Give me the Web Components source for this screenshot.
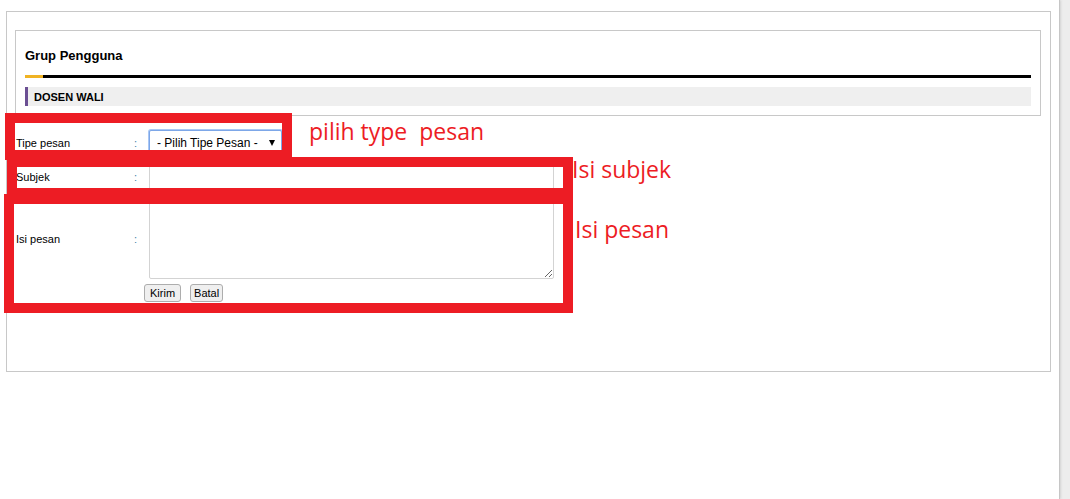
<!DOCTYPE html>
<html lang="id">
<head>
<meta charset="utf-8">
<title>Grup Pengguna</title>
<style>
  html { background: #ededed; }
  body { margin: 0; font: 11px/16px "Liberation Sans", Arial, sans-serif; color: #000; }
</style>
</head>
<body>
<app-page>
  <message-panel>
    <group-card heading="Grup Pengguna">DOSEN WALI</group-card>
    <message-form></message-form>
    <mark-box style="--x:-2px; --y:101px; --w:287px; --h:47px"></mark-box>
    <mark-box style="--x:0px; --y:145px; --w:566px; --h:41px"></mark-box>
    <mark-box style="--x:-3px; --y:182px; --w:569px; --h:119px"></mark-box>
    <mark-note style="--x:302px; --y:103px">pilih type  pesan</mark-note>
    <mark-note style="--x:565px; --y:141px">Isi subjek</mark-note>
    <mark-note style="--x:568px; --y:201px">Isi pesan</mark-note>
  </message-panel>
</app-page>
<script>
function define(name, html, setup) {
  const template = document.createElement('template');
  template.innerHTML = html.trim();
  customElements.define(name, class extends HTMLElement {
    connectedCallback() {
      if (this.shadowRoot) return;
      const root = this.attachShadow({ mode: 'open' });
      root.append(template.content.cloneNode(true));
      if (setup) setup(this, root);
    }
  });
}

define('app-page', `
  <style>
    :host { display: block; box-sizing: border-box; min-height: 100vh; margin-right: 10px;
      padding: 11px 8px 24px 6px; background: #fff; border-right: 1px solid #c6c6c6;
      box-shadow: 1px 0 2px #d4d4d4; }
  </style><slot></slot>`);

define('message-panel', `
  <style>
    :host { display: block; position: relative; box-sizing: border-box; min-height: 361px;
      padding: 18px 9px 68px 8px; border: 1px solid #c8c8c8; }
  </style><slot></slot>`);

define('group-card', `
  <style>
    :host { display: block; padding: 16px 9px 9px; border: 1px solid #c8c8c8; }
    h2 { margin: 0 0 10px; font-size: 13px; line-height: 18px; }
    .rule { height: 3px; margin-bottom: 9px; background: #000; }
    .rule::before { content: ""; display: block; width: 18px; height: 3px; background: #f0b323; }
    h3 { margin: 0; padding: 1px 0 0 6px; border-left: 3px solid #6b4f93; background: #efefef;
      font-size: 11px; line-height: 18px; }
  </style>
  <h2></h2><div class="rule"></div><h3><slot></slot></h3>`,
  (host, root) => { root.querySelector('h2').textContent = host.getAttribute('heading'); });

define('form-row', `
  <style>
    :host { display: grid; grid-template-columns: 118px 15px minmax(0, 405px); align-items: center; }
    i { font-style: normal; color: #4583a8; }
    select, input, textarea { box-sizing: border-box; margin: 0; background: #fff; color: #000;
      border: 1px solid #d3d3d3; border-radius: 2px; outline: none; }
    select { width: 133px; height: 26px; padding: 0 7px; appearance: none;
      border-color: #7da7e8; box-shadow: 0 0 0 1px #a9c7f5; font: 12px/16px "Liberation Sans", Arial, sans-serif; }
    .pick { position: relative; width: 133px; height: 26px; }
    .pick svg { position: absolute; right: 6px; top: 9px; pointer-events: none; }
    input { width: 100%; height: 26px; }
    textarea { display: block; width: 100%; height: 81px; resize: both; }
  </style>
  <label for="field"></label><i>:</i>`,
  (host, root) => {
    root.querySelector('label').textContent = host.getAttribute('label');
    const kinds = {
      select: '<div class="pick"><select id="field"><option>- Pilih Tipe Pesan -</option></select><svg width="8" height="8"><path d="M1 1h6L4 7z"/></svg></div>',
      input: '<input id="field" type="text">',
      textarea: '<textarea id="field"></textarea>'
    };
    root.querySelector('i').insertAdjacentHTML('afterend', kinds[host.getAttribute('kind')]);
  });

define('message-form', `
  <style>
    :host { display: block; padding: 14px 0 0 1px; }
    form { display: grid; gap: 8px; }
    .actions { display: flex; gap: 9px; margin: -3px 0 0 128px; }
    button { box-sizing: border-box; height: 18px; margin: 0; padding: 0 5px; background: #efefef;
      border: 1px solid #adadad; border-radius: 3px; color: #000;
      font: 11px/16px "Liberation Sans", Arial, sans-serif; }
    button + button { padding: 0 3px; }
  </style>
  <form>
    <form-row kind="select" label="Tipe pesan"></form-row>
    <form-row kind="input" label="Subjek"></form-row>
    <form-row kind="textarea" label="Isi pesan"></form-row>
    <div class="actions"><button type="button">Kirim</button><button type="button">Batal</button></div>
  </form>`);

define('mark-box', `
  <style>
    :host { display: block; position: absolute; box-sizing: border-box; pointer-events: none;
      left: var(--x); top: var(--y); width: var(--w); height: var(--h); border: 10px solid #ed1c24; }
  </style>`);

define('mark-note', `
  <style>
    :host { display: block; position: absolute; left: var(--x); top: var(--y); white-space: pre;
      color: #ed1c24; font: 23px/32px "Open Sans", "Noto Sans", sans-serif; }
  </style><slot></slot>`);
</script>
</body>
</html>
